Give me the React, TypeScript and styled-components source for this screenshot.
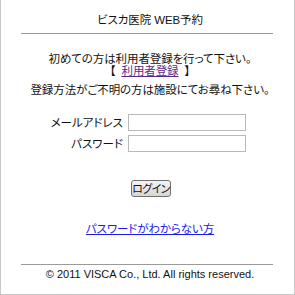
import styled, { createGlobalStyle } from 'styled-components';

const GlobalStyle = createGlobalStyle`
	html, body {
		margin: 0;
		padding: 0;
		background: #ffffff;
	}
	body {
		font-family: "Liberation Sans", "Noto Sans CJK JP", sans-serif;
		font-size: 11.5px;
		color: #111111;
	}
`;

const Frame = styled.div`
	box-sizing: border-box;
	width: 295px;
	height: 295px;
	border: 1px solid #c8c8c8;
	border-top: none;
	display: flex;
	flex-direction: column;
`;

const Line = styled.div<{ $top?: number }>`
	margin-top: ${({ $top }) => $top ?? 0}px;
	padding-left: 5px;
	text-align: center;
	line-height: 12px;
	font-feature-settings: 'palt';
	letter-spacing: -0.1px;
	white-space: nowrap;
`;

const Rule = styled.div<{ $top: number }>`
	margin: ${({ $top }) => $top}px 21px 0 20px;
	height: 1px;
	background: #9a9a9a;
`;

const VisitedLink = styled.a`
	color: #5a2a8c;
	text-decoration: underline;
	margin: 0 6px;
`;

const HelpLink = styled.a`
	color: #1a1aee;
	text-decoration: underline;
`;

const Form = styled.div`
	margin-top: 18px;
	display: grid;
	grid-template-columns: 122px 118px;
	column-gap: 5px;
	row-gap: 4px;
	align-items: center;
`;

const Label = styled.label`
	text-align: right;
	font-feature-settings: 'palt';
	line-height: 12px;
	white-space: nowrap;
`;

const Field = styled.input`
	box-sizing: border-box;
	width: 118px;
	height: 17px;
	margin: 0;
	padding: 1px 3px;
	border: 1px solid #b9b9b9;
	background: #ffffff;
	font-size: 12px;
`;

const ButtonRow = styled.div`
	margin-top: 28px;
	padding-left: 7px;
	display: flex;
	justify-content: center;
`;

const LoginButton = styled.button`
	box-sizing: border-box;
	width: 40px;
	height: 17px;
	padding: 0;
	border: 1px solid #707070;
	border-radius: 3px;
	background: linear-gradient(#f4f4f4, #d6d6d6);
	font-family: "Liberation Sans", "Noto Sans CJK JP", sans-serif;
	font-size: 11px;
	line-height: 14px;
	color: #111111;
	letter-spacing: -0.6px;
	font-feature-settings: 'palt';
	white-space: nowrap;
`;

const Copyright = styled.div`
	margin-top: 3px;
	padding-left: 5px;
	text-align: center;
	font-family: "Liberation Sans", sans-serif;
	font-size: 11px;
	line-height: 13px;
	white-space: nowrap;
`;

export default function App() {
	return (
		<>
			<GlobalStyle />
			<Frame>
				<Line $top={14}>ビスカ医院 WEB予約</Line>
				<Rule $top={7} />
				<Line $top={19}>初めての方は利用者登録を行って下さい。</Line>
				<Line>
					【<VisitedLink href="#">利用者登録</VisitedLink>】
				</Line>
				<Line $top={7}>登録方法がご不明の方は施設にてお尋ね下さい。</Line>
				<Form>
					<Label>メールアドレス</Label>
					<Field type="text" />
					<Label>パスワード</Label>
					<Field type="password" />
				</Form>
				<ButtonRow>
					<LoginButton>ログイン</LoginButton>
				</ButtonRow>
				<Line $top={26}>
					<HelpLink href="#">パスワードがわからない方</HelpLink>
				</Line>
				<Rule $top={29} />
				<Copyright>© 2011 VISCA Co., Ltd. All rights reserved.</Copyright>
			</Frame>
		</>
	);
}
